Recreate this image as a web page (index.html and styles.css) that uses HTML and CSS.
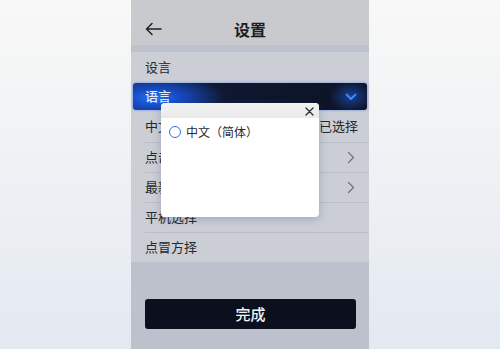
FILE: index.html
```html
<!DOCTYPE html>
<html lang="zh">
<head>
<meta charset="utf-8">
<link rel="stylesheet" href="styles.css">
</head>
<body>
<div class="phone">
  <header class="top">
    <svg class="back" width="17" height="14" viewBox="0 0 17 14"><path d="M16 7H1.8M7 1.5L1.5 7 7 12.5" fill="none" stroke="#1e2026" stroke-width="1.5" stroke-linecap="round" stroke-linejoin="round"/></svg>
    <h1 class="title">设置</h1>
  </header>
  <div class="band"></div>
  <ul class="list">
    <li class="row r1"><span>设言</span></li>
    <li class="row active"><span>语言</span>
      <svg class="down" width="12" height="8" viewBox="0 0 12 8"><path d="M1.5 1.5L6 6l4.5-4.5" fill="none" stroke="#3b8cff" stroke-width="1.8" stroke-linecap="round" stroke-linejoin="round"/></svg>
    </li>
    <li class="row r3"><span>中文</span><span class="val">已选择</span></li>
    <li class="row line"><span>点击</span>
      <svg class="right" width="8" height="13" viewBox="0 0 8 13"><path d="M1.5 1.5L6.5 6.5l-5 5" fill="none" stroke="#6e727b" stroke-width="1.2" stroke-linecap="round" stroke-linejoin="round"/></svg>
    </li>
    <li class="row line"><span>最新</span>
      <svg class="right" width="8" height="13" viewBox="0 0 8 13"><path d="M1.5 1.5L6.5 6.5l-5 5" fill="none" stroke="#6e727b" stroke-width="1.2" stroke-linecap="round" stroke-linejoin="round"/></svg>
    </li>
    <li class="row line"><span>平机选择</span></li>
    <li class="row line"><span>点冒方择</span></li>
  </ul>
  <div class="foot">
    <button class="done">完成</button>
  </div>
  <div class="modal">
    <div class="modal-head">
      <svg class="close" width="9" height="9" viewBox="0 0 9 9"><path d="M1 1l7 7M8 1L1 8" stroke="#2a2c31" stroke-width="1.3" stroke-linecap="round"/></svg>
    </div>
    <div class="option"><span class="radio"></span><span>中文（简体）</span></div>
  </div>
</div>
</body>
</html>
```

FILE: styles.css
```css
* { box-sizing: border-box; }
html, body { margin: 0; padding: 0; }
body {
  width: 500px;
  height: 349px;
  overflow: hidden;
  background: linear-gradient(180deg, #f8f8f7 0%, #eef1f4 50%, #e3e9f1 100%);
  font-family: "Noto Sans CJK SC", "Noto Sans", sans-serif;
}
.phone {
  position: relative;
  width: 238px;
  height: 349px;
  margin: 0 auto;
  background: #c9ccd2;
  display: flex;
  flex-direction: column;
}
.top {
  height: 45px;
  display: flex;
  align-items: center;
  justify-content: center;
  position: relative;
  background: #c8cace;
}
.back { position: absolute; left: 14px; top: 22px; }
.title {
  margin: 0;
  font-size: 16px;
  font-weight: 700;
  color: #1b1d22;
  line-height: 1;
  margin-top: 13px;
}
.band { height: 7px; background: #bcc2ce; }
.list {
  list-style: none;
  margin: 0;
  padding: 0;
  background: #cbced4;
}
.row {
  height: 30px;
  display: flex;
  align-items: center;
  justify-content: space-between;
  padding: 0 12px 0 14px;
  font-size: 13px;
  line-height: 1;
  color: #24272d;
  position: relative;
}
.row > span { position: relative; top: -1px; }
.r1 { height: 31px; }
.active {
  height: 27px;
  margin: 0 2px;
  padding: 0 10px 0 12px;
  border-radius: 3px;
  background:
    radial-gradient(ellipse 70px 24px at 22px 55%, #2174f8 0%, rgba(24,84,225,0.78) 38%, rgba(15,40,120,0) 100%),
    radial-gradient(ellipse 22px 16px at 218px 50%, rgba(30,100,240,0.55), rgba(20,60,180,0) 100%),
    linear-gradient(90deg, #12254f 0%, #0f1830 40%, #0e1324 100%);
  box-shadow: 0 0 3px rgba(40,110,255,0.6);
  color: #e2ecff;
  font-weight: 500;
}
.r3 { height: 32px; }
.val { margin-right: -1px; }
.line::before {
  content: "";
  position: absolute;
  left: 14px;
  right: 0;
  top: 0;
  border-top: 1px solid #b9bdc5;
}
.right { margin-right: 2px; }
.foot {
  flex: 1;
  background: #bcc1cb;
  padding: 37px 13px 0 14px;
}
.done {
  display: block;
  width: 100%;
  height: 30px;
  border: 0;
  border-radius: 3px;
  background: #0c0f1d;
  color: #f2f3f6;
  font-family: inherit;
  font-size: 15px;
  line-height: 1;
  padding: 0 0 2px;
  font-weight: 500;
}
.modal {
  position: absolute;
  left: 30px;
  top: 103px;
  width: 158px;
  height: 114px;
  background: #ffffff;
  border-radius: 4px;
  box-shadow: 0 2px 8px rgba(40,70,130,0.28);
  overflow: hidden;
}
.modal-head {
  height: 15px;
  background: linear-gradient(180deg, #f2f2f1, #e9eaea);
  position: relative;
}
.close { position: absolute; right: 5px; top: 4px; }
.option {
  display: flex;
  align-items: center;
  gap: 5px;
  padding: 5px 0 0 8px;
  font-size: 12px;
  color: #2a2c31;
}
.radio {
  width: 12px;
  height: 12px;
  border: 1.6px solid #2f72ee;
  border-radius: 50%;
}
```
